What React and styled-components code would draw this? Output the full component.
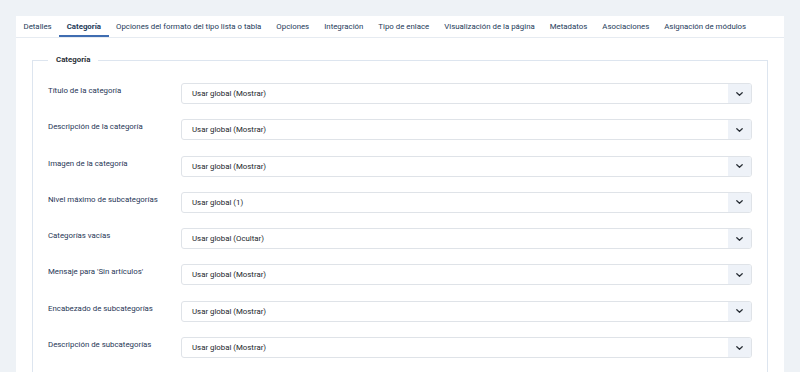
import React from 'react';
import styled, { createGlobalStyle } from 'styled-components';

const GlobalStyle = createGlobalStyle`
  html, body {
    margin: 0;
    padding: 0;
    background: #eef2f6;
    font-family: Roboto, 'Liberation Sans', sans-serif;
    overflow: hidden;
  }
`;

const Page = styled.div`
  padding: 16px 16px 0;
  height: 372px;
  box-sizing: border-box;
`;

const Panel = styled.div`
  background: #fff;
  height: 100%;
  overflow: hidden;
`;

const Tabs = styled.nav`
  display: flex;
  height: 21px;
  border-bottom: 1px solid #e6ebf1;
`;

const Tab = styled.div`
  padding: 2px 7.5px 0;
  font-size: 7.85px;
  line-height: 17px;
  color: #243a59;
  font-weight: ${p => (p.$active ? 700 : 400)};
  border-bottom: 2px solid ${p => (p.$active ? '#3f6db1' : 'transparent')};
  white-space: nowrap;
`;

const Content = styled.div`
  padding: 17px 16px 0;
`;

const Fieldset = styled.fieldset`
  margin: 0;
  border: 1px solid #dde5ef;
  padding: 0 15px 40px;
  min-width: 0;
`;

const Legend = styled.legend`
  padding: 0 8px;
  font-size: 7.85px;
  line-height: 10px;
  font-weight: 700;
  color: #2b3138;
`;

const Rows = styled.div`
  display: grid;
  row-gap: 15.3px;
  padding-top: 18px;
`;

const Row = styled.div`
  display: grid;
  grid-template-columns: 133px 1fr;
  height: 21px;
`;

const Label = styled.label`
  font-size: 7.85px;
  line-height: 10px;
  padding-top: 3px;
  color: #1f3656;
`;

const Select = styled.div`
  display: flex;
  border: 1px solid #dfe3e8;
  border-radius: 3px;
  overflow: hidden;
  box-sizing: border-box;
  height: 21px;
`;

const Value = styled.span`
  flex: 1;
  font-size: 7.85px;
  line-height: 19px;
  padding-left: 10px;
  color: #22262a;
`;

const Caret = styled.span`
  width: 23px;
  background: #eef2f8;
  display: flex;
  align-items: center;
  justify-content: center;
`;

const tabs = [
  'Detalles',
  'Categoría',
  'Opciones del formato del tipo lista o tabla',
  'Opciones',
  'Integración',
  'Tipo de enlace',
  'Visualización de la página',
  'Metadatos',
  'Asociaciones',
  'Asignación de módulos',
];

const fields = [
  ['Título de la categoría', 'Usar global (Mostrar)'],
  ['Descripción de la categoría', 'Usar global (Mostrar)'],
  ['Imagen de la categoría', 'Usar global (Mostrar)'],
  ['Nivel máximo de subcategorías', 'Usar global (1)'],
  ['Categorías vacías', 'Usar global (Ocultar)'],
  ["Mensaje para 'Sin artículos'", 'Usar global (Mostrar)'],
  ['Encabezado de subcategorías', 'Usar global (Mostrar)'],
  ['Descripción de subcategorías', 'Usar global (Mostrar)'],
];

const Chevron = () => (
  <svg width="7" height="4" viewBox="0 0 7 4">
    <path d="M0.8 0.8l2.7 2.4 2.7-2.4" fill="none" stroke="#2b3138" strokeWidth="1.3" strokeLinecap="round" strokeLinejoin="round" />
  </svg>
);

export default function App() {
  return (
    <Page>
      <GlobalStyle />
      <Panel>
        <Tabs>
          {tabs.map(t => (
            <Tab key={t} $active={t === 'Categoría'}>{t}</Tab>
          ))}
        </Tabs>
        <Content>
          <Fieldset>
            <Legend>Categoría</Legend>
            <Rows>
              {fields.map(([label, value]) => (
                <Row key={label}>
                  <Label>{label}</Label>
                  <Select>
                    <Value>{value}</Value>
                    <Caret><Chevron /></Caret>
                  </Select>
                </Row>
              ))}
            </Rows>
          </Fieldset>
        </Content>
      </Panel>
    </Page>
  );
}
